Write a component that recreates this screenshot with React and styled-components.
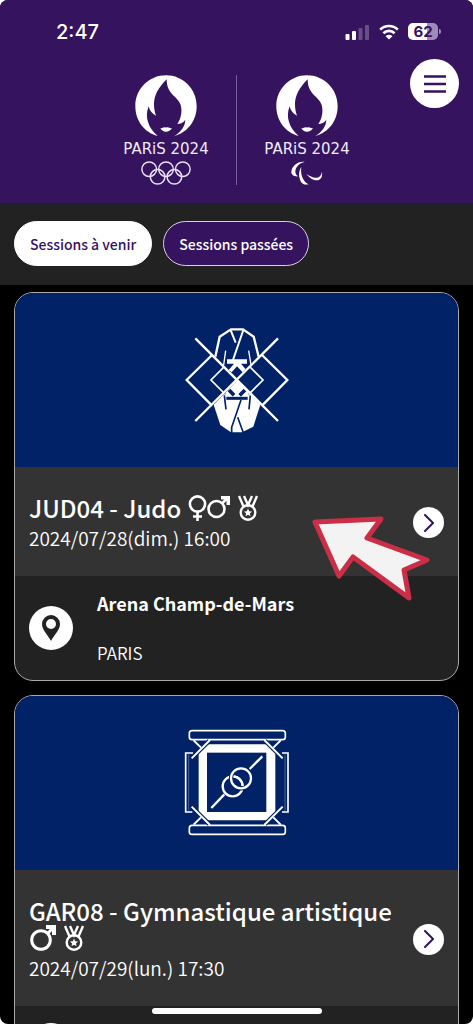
import { useState } from 'react';
import styled, { createGlobalStyle } from 'styled-components';

const SESSIONS = [
    {
        id: 'JUD04',
        title: 'JUD04 - Judo',
        date: '2024/07/28(dim.) 16:00',
        gender: 'mixed',
        sport: 'judo',
        venue: 'Arena Champ-de-Mars',
        hasAccessLine: true,
        city: 'PARIS',
    },
    {
        id: 'GAR08',
        title: 'GAR08 - Gymnastique artistique',
        date: '2024/07/29(lun.) 17:30',
        gender: 'male',
        sport: 'gymnastics',
        venue: 'Arena Bercy',
        hasAccessLine: false,
        city: 'PARIS',
    },
];

const SignalIcon = () => (
    <svg width="25" height="16" viewBox="0 0 25 16" fill="#fff" aria-hidden="true">
        <rect x="0.500" y="10" width="4" height="6" rx="1" />
        <rect x="7" y="7" width="4" height="9" rx="1" />
        <rect x="13.500" y="4" width="4" height="12" rx="1" opacity=".25" />
        <rect x="20" y="1" width="4" height="15" rx="1" opacity=".25" />
    </svg>
);

const WifiIcon = () => (
    <svg width="20" height="16" viewBox="0 0 20 16" aria-hidden="true">
        <path d="M1.2 5.6A12.6 12.6 0 0 1 18.8 5.6" fill="none" stroke="#fff" strokeWidth="2.7" />
        <path d="M4.4 9.2A8 8 0 0 1 15.6 9.2" fill="none" stroke="#fff" strokeWidth="2.6" />
        <path d="M10 15.6 6.6 12.2A4.8 4.8 0 0 1 13.4 12.2Z" fill="#fff" />
    </svg>
);

const FlameLogo = () => (
    <svg width="62" height="62" viewBox="0 0 186 186" aria-hidden="true">
        <path
            fill="#fff"
            d="M68 183C28 172 1 138 1 93 1 42 42 1 93 1S185 42 185 93C185 138 158 172 118 183 138 170 150 155 151 134 145 143 137 147 127 147 139 130 142 108 137 90 128 62 95 60 95 13 70 38 57 62 57 88 57 100 59 110 63 122 52 116 43 107 41 94 28 125 40 160 68 183Z"
        />
        <path fill="#fff" d="M76 160c6 0 10-4 14-3 2 1 4 1 6 0 4-1 9 3 15 3-5 7-10 10-18 10s-13-3-17-10Z" />
    </svg>
);

const OlympicRings = () => (
    <svg width="50" height="24" viewBox="0 0 50 24" fill="none" stroke="#e8dff2" strokeWidth="1.5" aria-hidden="true">
        <circle cx="8.2" cy="8.2" r="7.3" />
        <circle cx="25" cy="8.2" r="7.3" />
        <circle cx="41.8" cy="8.2" r="7.3" />
        <circle cx="16.6" cy="15.8" r="7.3" />
        <circle cx="33.4" cy="15.8" r="7.3" />
    </svg>
);

const Agitos = () => (
    <svg width="32" height="24" viewBox="0 0 96 72" fill="#fff" aria-hidden="true">
        <path d="M41 3C25-1 1 13 1 34c0 8 9 13 20 12C3 33 18 7 41 3Z" />
        <path d="M31 18c-7 10-9 24-4 38 4 12 14 17 26 14C39 63 27 45 31 18Z" />
        <path d="M46 39c9 10 19 19 31 19 12-1 18-9 16-26-3 14-10 20-21 18-9-1-18-6-26-11Z" />
    </svg>
);

const JudoPictogram = () => (
    <svg width="140" height="140" viewBox="-10 0 420 420" role="img" aria-label="Judo">
        <g fill="none" stroke="#fff" strokeWidth="7">
            <path d="M135 140 148 80 182 58H218L250 80 265 140" />
            <path d="M180 58 196 98M219 60 188 150" strokeWidth="6" />
            <path d="M166 122 160 165M235 122 242 165" strokeWidth="4" />
        </g>
        <path d="M170 148H230V161H212L226 178 217 187 200 169 184 187 175 180 191 161H170Z" fill="#fff" />
        <path d="M130 284 200 212 270 284 249 350 215 367H182L150 345Z" fill="#fff" />
        <path d="M160 250 165 245 165 255ZM240 250 235 245 235 255Z" fill="#012266" />
        <g fill="none" stroke="#012266">
            <path d="M212 270 184 352V370M202 322 219 368" strokeWidth="5" />
            <path d="M162 256 167 298M240 256 236 298" strokeWidth="5" />
            <path d="M168 265H232" strokeWidth="9" />
            <path d="M176 240 191 256M224 240 208 256" strokeWidth="11" />
        </g>
        <g fill="none" stroke="#fff">
            <path d="M75 85 323 333M323 85 75 333" strokeWidth="7" />
            <path d="M125 135 49 210 125 287M275 135 351 210 275 287" strokeWidth="7" />
            <path d="M162 170 122 210 162 250M238 170 278 210 238 250" strokeWidth="5" />
        </g>
    </svg>
);

const GymnasticsPictogram = () => (
    <svg width="140" height="140" viewBox="-10 -6 420 420" role="img" aria-label="Gymnastique artistique">
        <path d="M110 88H290L315 113V291L290 316H110L85 291V113Z" fill="#fff" />
        <rect x="110" y="113" width="178" height="178" fill="#012266" />
        <g fill="none" stroke="#fff" strokeWidth="5">
            <rect x="57" y="47" width="288" height="27" rx="8" />
            <rect x="57" y="331" width="288" height="27" rx="8" />
            <path d="M68 114H46V291H66M335 114H353V291H335" />
            <path d="M55 118V287M344 118V287" strokeWidth="2" stroke="#6f83b0" />
        </g>
        <g fill="none" stroke="#012266" strokeWidth="13">
            <path d="M64 130 117 77M337 130 284 77M64 275 117 328M337 275 284 328" />
        </g>
        <g fill="none" stroke="#fff" strokeWidth="6">
            <path d="M64 130 119 75M337 130 282 75M64 275 119 330M337 275 282 330" />
            <path d="M70 76 92 98M331 76 309 98M70 329 92 307M331 329 309 307" />
        </g>
        <g fill="none" stroke="#fff" strokeWidth="7">
            <path d="M276 124 238 162M162 238 123 279" />
            <circle cx="187" cy="214" r="30" />
            <circle cx="212" cy="190" r="30" stroke="#012266" strokeWidth="13" />
            <circle cx="212" cy="190" r="30" />
            <path d="M190 184A30 30 0 0 1 217 213" />
        </g>
    </svg>
);

const MixedIcon = () => (
    <TitleIcon width="42" height="26" viewBox="0 0 42 26" role="img" aria-label="Femmes et hommes">
        <g fill="none" stroke="#fff" strokeWidth="2.6">
            <circle cx="9.5" cy="9" r="7.6" />
            <path d="M9.5 17V26M5 21.5H14" />
            <circle cx="28.5" cy="14" r="8" />
            <path d="M34 8.500 39 3.500" />
        </g>
        <path d="M33 1H42V10H38.500V4.500H33Z" fill="#fff" />
    </TitleIcon>
);

const MaleIcon = () => (
    <TitleIcon width="26" height="26" viewBox="0 0 26 26" role="img" aria-label="Hommes">
        <g fill="none" stroke="#fff" strokeWidth="3">
            <circle cx="11" cy="15" r="9.300" />
            <path d="M17.500 8.500 23 3" />
        </g>
        <path d="M16 0H26V10H22V4H16Z" fill="#fff" />
    </TitleIcon>
);

const MedalIcon = () => (
    <TitleIcon width="20" height="26" viewBox="0 0 20 26" role="img" aria-label="Finale">
        <g fill="none" stroke="#fff" strokeWidth="2.4">
            <circle cx="10" cy="17.500" r="7.300" />
            <path d="M1 1 5.500 11.500M6 1 10 10 14 1M19 1 14.500 11.500" />
        </g>
        <path d="m10 13.600 1.200 2.600 2.800.3-2.100 1.900.6 2.800-2.500-1.400-2.500 1.400.6-2.800L6 16.500l2.800-.3Z" fill="#fff" />
    </TitleIcon>
);

const ChevronIcon = () => (
    <svg width="10" height="18" viewBox="0 0 10 18" fill="none" stroke="#35135f" strokeWidth="2" strokeLinecap="round" aria-hidden="true">
        <path d="M1 1 9 9 1 17" />
    </svg>
);

const PinIcon = () => (
    <svg width="18" height="26" viewBox="0 0 18 26" aria-hidden="true">
        <path
            fill="#222"
            fillRule="evenodd"
            d="M9 0a9 9 0 0 0-9 9c0 6 6 11 9 17 3-6 9-11 9-17a9 9 0 0 0-9-9Zm0 4a5 5 0 1 1 0 10A5 5 0 0 1 9 4Z"
        />
    </svg>
);

const MenuIcon = () => (
    <svg width="22" height="18" viewBox="0 0 22 18" stroke="#35135f" strokeWidth="2.4" aria-hidden="true">
        <path d="M0 1.500H22M0 9H22M0 16.500H22" />
    </svg>
);

const Pointer = () => (
    <PointerArrow width="120" height="86" viewBox="0 0 120 86" aria-hidden="true">
        <path
            d="M4 6 70 3 56 22 116 44 93 54 98 82 42 41 28 60Z"
            fill="#f3f3f3"
            stroke="#cb2f47"
            strokeWidth="5"
            strokeLinejoin="round"
        />
    </PointerArrow>
);

function SessionCard({ session, highlighted }) {
    return (
        <Card>
            <Picture>
                {session.sport === 'judo' ? <JudoPictogram /> : <GymnasticsPictogram />}
            </Picture>
            <Info>
                <InfoText>
                    <Title>
                        {session.title}{' '}
                        {session.gender === 'mixed' ? <MixedIcon /> : <MaleIcon />}{' '}
                        <MedalIcon />
                    </Title>
                    <SessionDate>{session.date}</SessionDate>
                </InfoText>
                <DetailButton type="button" aria-label={`Voir ${session.id}`}>
                    <ChevronIcon />
                </DetailButton>
                {highlighted && <Pointer />}
            </Info>
            <Venue>
                <PinCircle>
                    <PinIcon />
                </PinCircle>
                <VenueText $spaced={session.hasAccessLine}>
                    <VenueName>{session.venue}</VenueName>
                    <City>{session.city}</City>
                </VenueText>
            </Venue>
        </Card>
    );
}

export default function App() {
    const [tab, setTab] = useState('upcoming');

    return (
        <>
            <GlobalStyle />
            <Screen>
                <Header>
                    <StatusBar>
                        <Clock>2:47</Clock>
                        <StatusIcons>
                            <SignalIcon />
                            <WifiIcon />
                            <Battery>
                                <BatteryLevel>62</BatteryLevel>
                            </Battery>
                        </StatusIcons>
                    </StatusBar>
                    <Logos>
                        <Logo>
                            <FlameLogo />
                            <Wordmark>PARiS 2024</Wordmark>
                            <OlympicRings />
                        </Logo>
                        <Divider />
                        <Logo>
                            <FlameLogo />
                            <Wordmark>PARiS 2024</Wordmark>
                            <Agitos />
                        </Logo>
                    </Logos>
                    <MenuButton type="button" aria-label="Menu">
                        <MenuIcon />
                    </MenuButton>
                </Header>
                <Tabs>
                    <Tab type="button" $active={tab === 'upcoming'} onClick={() => setTab('upcoming')}>
                        Sessions à venir
                    </Tab>
                    <Tab type="button" $active={tab === 'past'} onClick={() => setTab('past')}>
                        Sessions passées
                    </Tab>
                </Tabs>
                <List>
                    {SESSIONS.map((session, index) => (
                        <SessionCard key={session.id} session={session} highlighted={index === 0} />
                    ))}
                </List>
                <HomeIndicator />
            </Screen>
        </>
    );
}

const GlobalStyle = createGlobalStyle`
    * {
        box-sizing: border-box;
    }

    body {
        margin: 0;
        background: #fff;
        font-family: 'Noto Sans CJK JP', 'Noto Sans', sans-serif;
        color: #fff;
    }

    button {
        font-family: inherit;
        cursor: pointer;
    }

    svg {
        display: block;
        flex-shrink: 0;
    }
`;

const Screen = styled.div`
    position: relative;
    height: 100vh;
    overflow: hidden;
    background: #000;
    border-radius: 8px;
`;

const Header = styled.header`
    position: relative;
    padding-bottom: 18px;
    background: #35135f;
`;

const StatusBar = styled.div`
    display: flex;
    align-items: center;
    justify-content: space-between;
    height: 63px;
    padding: 0 35px 0 56px;
`;

const Clock = styled.span`
    font-family: Inter, sans-serif;
    font-size: 20px;
    font-weight: 500;
`;

const StatusIcons = styled.div`
    display: flex;
    align-items: center;
    gap: 9px;
`;

const Battery = styled.div`
    position: relative;
    width: 30px;
    height: 17px;
    border-radius: 5px;
    background: linear-gradient(to right, #fff 62%, #a08bb8 62%);

    &::after {
        content: '';
        position: absolute;
        top: 6px;
        right: -3px;
        width: 2px;
        height: 5px;
        border-radius: 0 2px 2px 0;
        background: #a08bb8;
    }
`;

const BatteryLevel = styled.span`
    display: block;
    font-family: Inter, sans-serif;
    font-size: 15px;
    font-weight: 700;
    line-height: 17px;
    text-align: center;
    color: #35135f;
`;

const Logos = styled.div`
    display: flex;
    justify-content: center;
    gap: 21px;
    padding-top: 12px;
`;

const Logo = styled.div`
    display: flex;
    flex-direction: column;
    align-items: center;
    width: 98px;
`;

const Wordmark = styled.span`
    margin: 3px 0;
    font-family: 'DejaVu Sans', sans-serif;
    font-size: 15px;
    line-height: 18px;
    white-space: nowrap;
    color: #f1eaf7;
`;

const Divider = styled.div`
    width: 1px;
    background: #77609a;
`;

const MenuButton = styled.button`
    position: absolute;
    top: 59px;
    right: 14px;
    display: flex;
    align-items: center;
    justify-content: center;
    width: 49px;
    height: 49px;
    padding: 0;
    border: none;
    border-radius: 50%;
    background: #fff;
`;

const Tabs = styled.nav`
    display: flex;
    gap: 11px;
    padding: 18px 14px 19px;
    background: #222;
`;

const Tab = styled.button`
    height: 45px;
    padding: 0 15px;
    border: 1px solid ${({ $active }) => ($active ? '#fff' : '#d9cfe6')};
    border-radius: 23px;
    background: ${({ $active }) => ($active ? '#fff' : '#35135f')};
    color: ${({ $active }) => ($active ? '#35135f' : '#fff')};
    font-size: 14px;
    font-weight: 500;
`;

const List = styled.main`
    display: flex;
    flex-direction: column;
    gap: 14px;
    padding: 7px 14px;
`;

const Card = styled.article`
    border: 1px solid #aaa;
    border-radius: 19px;
    background: #222;
`;

const Picture = styled.div`
    display: flex;
    align-items: center;
    justify-content: center;
    height: 174px;
    border-radius: 18px 18px 0 0;
    background: #012266;
`;

const Info = styled.div`
    position: relative;
    display: flex;
    align-items: center;
    gap: 8px;
    padding: 27px 14px 25px;
    background: #333;
`;

const InfoText = styled.div`
    flex: 1;
    min-width: 0;
`;

const Title = styled.h2`
    margin: 0;
    font-size: 24px;
    font-weight: 500;
    line-height: 27px;
`;

const TitleIcon = styled.svg`
    display: inline-block;
    margin: 0 2px 0 1px;
    vertical-align: -3px;
`;

const SessionDate = styled.p`
    margin: 3px 0 0;
    font-size: 19px;
    font-weight: 350;
    line-height: 27px;
`;

const DetailButton = styled.button`
    display: flex;
    align-items: center;
    justify-content: center;
    flex-shrink: 0;
    width: 31px;
    height: 31px;
    padding: 0;
    border: none;
    border-radius: 50%;
    background: #fff;
`;

const PointerArrow = styled.svg`
    position: absolute;
    top: 49px;
    right: 27px;
    z-index: 1;
    pointer-events: none;
`;

const Venue = styled.div`
    display: flex;
    align-items: center;
    gap: 24px;
    padding: 15px 14px;
`;

const PinCircle = styled.div`
    display: flex;
    align-items: center;
    justify-content: center;
    width: 44px;
    height: 44px;
    border-radius: 50%;
    background: #fff;
`;

const VenueText = styled.div`
    display: flex;
    flex-direction: column;
    gap: ${({ $spaced }) => ($spaced ? '26px' : '0')};
`;

const VenueName = styled.strong`
    font-size: 18px;
    font-weight: 700;
    line-height: 24px;
`;

const City = styled.span`
    font-size: 17px;
    font-weight: 350;
    line-height: 24px;
`;

const HomeIndicator = styled.div`
    position: absolute;
    bottom: 10px;
    left: 50%;
    width: 170px;
    height: 6px;
    border-radius: 3px;
    background: #fff;
    transform: translateX(-50%);
`;
